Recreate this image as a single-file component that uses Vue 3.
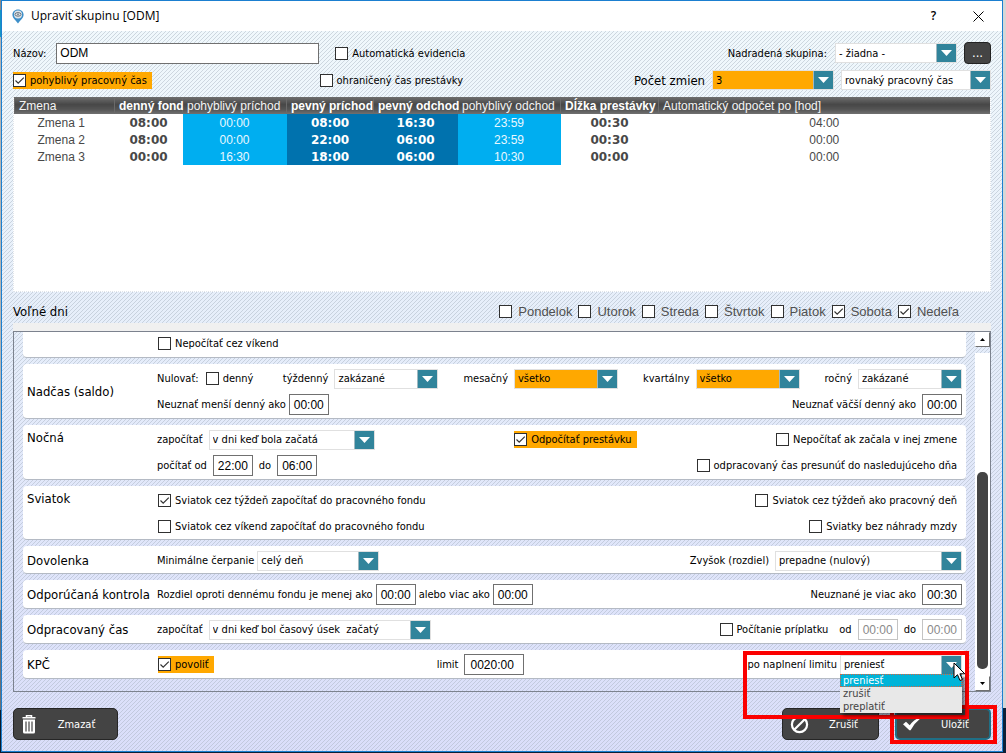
<script setup>
import { ref } from 'vue'

const days = ref([
  { name: 'Pondelok', on: false },
  { name: 'Utorok', on: false },
  { name: 'Streda', on: false },
  { name: 'Štvrtok', on: false },
  { name: 'Piatok', on: false },
  { name: 'Sobota', on: true },
  { name: 'Nedeľa', on: true }
])

const shifts = [
  ['Zmena 1', '08:00', '00:00', '08:00', '16:30', '23:59', '00:30', '04:00'],
  ['Zmena 2', '08:00', '00:00', '22:00', '06:00', '23:59', '00:30', '00:00'],
  ['Zmena 3', '00:00', '16:30', '18:00', '06:00', '10:30', '00:00', '00:00']
]

const overtime = [
  { id: 'ot-week', label: 'týždenný', value: 'zakázané', mark: false },
  { id: 'ot-month', label: 'mesačný', value: 'všetko', mark: true },
  { id: 'ot-quarter', label: 'kvartálny', value: 'všetko', mark: true },
  { id: 'ot-year', label: 'ročný', value: 'zakázané', mark: false }
]

const limitActions = ['preniesť', 'zrušiť', 'preplatiť']
</script>

<template>
  <div class="desktop">
    <main class="window">
      <header class="titlebar">
        <svg class="pin" width="12" height="15" viewBox="0 0 12 15" aria-hidden="true">
          <path d="M6 0.5C2.8 0.5.4 2.8.4 5.8c0 3 3 5.300 5.600 8.700 2.600-3.400 5.600-5.700 5.600-8.700C11.600 2.800 9.200.5 6 .5z" fill="#3d8fc9" />
          <circle cx="6" cy="5.600" r="4" fill="#dfe5ea" />
          <ellipse cx="6" cy="5.400" rx="3" ry="1.800" fill="none" stroke="#68747e" />
          <circle cx="6" cy="5.400" r=".8" fill="#68747e" />
        </svg>
        <h1>Upraviť skupinu [ODM]</h1>
        <button class="tb-btn" type="button" aria-label="Pomocník">?</button>
        <button class="tb-btn" type="button" aria-label="Zavrieť">
          <svg width="11" height="11" viewBox="0 0 11 11"><path d="M.5.5l10 10M10.500.5l-10 10" stroke="#000" fill="none" /></svg>
        </button>
      </header>

      <form class="body" @submit.prevent>
        <div class="line first">
          <label for="name">Názov:</label>
          <input id="name" class="txt name" type="text" value="ODM" />
          <label class="chk auto"><input type="checkbox" />Automatická evidencia</label>
          <label class="push" for="parent">Nadradená skupina:</label>
          <select id="parent" class="combo w122"><option>- žiadna -</option></select>
          <button class="dots" type="button">...</button>
        </div>

        <div class="line second">
          <div class="half">
            <label class="chk mark"><input type="checkbox" checked />pohyblivý pracovný čas</label>
            <label class="chk"><input type="checkbox" />ohraničený čas prestávky</label>
          </div>
          <label class="push big" for="count">Počet zmien</label>
          <select id="count" class="combo hot w122"><option>3</option></select>
          <select class="combo w150" aria-label="Typ pracovného času"><option>rovnaký pracovný čas</option></select>
        </div>

        <div class="grid-box">
          <table>
            <colgroup>
              <col class="c-name" /><col class="c-fund" /><col class="c-early" /><col class="c-in" />
              <col class="c-out" /><col class="c-late" /><col class="c-break" /><col />
            </colgroup>
            <thead>
              <tr>
                <th>Zmena</th><th class="b">denný fond</th><th>pohyblivý príchod</th><th class="b">pevný príchod</th>
                <th class="b">pevný odchod</th><th>pohyblivý odchod</th><th class="b">Dĺžka prestávky</th>
                <th>Automatický odpočet po [hod]</th>
              </tr>
            </thead>
            <tbody>
              <tr v-for="s in shifts" :key="s[0]">
                <td class="n">{{ s[0] }}</td><td class="b">{{ s[1] }}</td><td class="light">{{ s[2] }}</td>
                <td class="b dark">{{ s[3] }}</td><td class="b dark">{{ s[4] }}</td><td class="light">{{ s[5] }}</td>
                <td class="b">{{ s[6] }}</td><td>{{ s[7] }}</td>
              </tr>
            </tbody>
          </table>
        </div>

        <div class="days">
          <span class="big">Voľné dni</span>
          <label v-for="d in days" :key="d.name"><input v-model="d.on" type="checkbox" />{{ d.name }}</label>
        </div>
        <div class="strip"></div>

        <section class="panel">
          <div class="cards">
            <div class="card cut">
              <div class="rows">
                <div class="row"><label class="chk"><input type="checkbox" />Nepočítať cez víkend</label></div>
              </div>
            </div>

            <div class="card">
              <h2>Nadčas (saldo)</h2>
              <div class="rows">
                <div class="row groups">
                  <div class="f lead"><span>Nulovať:</span><label class="chk tight"><input type="checkbox" />denný</label></div>
                  <div v-for="o in overtime" :key="o.id" class="f">
                    <label :for="o.id">{{ o.label }}</label>
                    <select :id="o.id" class="combo w104" :class="{ hot: o.mark }"><option>{{ o.value }}</option></select>
                  </div>
                </div>
                <div class="row">
                  <div class="f snug"><label for="min-day">Neuznať menší denný ako</label><input id="min-day" class="txt time" type="text" value="00:00" /></div>
                  <div class="f"><label for="max-day">Neuznať väčší denný ako</label><input id="max-day" class="txt time" type="text" value="00:00" /></div>
                </div>
              </div>
            </div>

            <div class="card top">
              <h2>Nočná</h2>
              <div class="rows">
                <div class="row">
                  <div class="f"><label for="night">započítať</label><select id="night" class="combo w166"><option>v dni keď bola začatá</option></select></div>
                  <label class="chk mark"><input type="checkbox" checked />Odpočítať prestávku</label>
                  <label class="chk"><input type="checkbox" />Nepočítať ak začala v inej zmene</label>
                </div>
                <div class="row">
                  <div class="f"><label for="n-from">počítať od</label><input id="n-from" class="txt time" type="text" value="22:00" />
                    <label for="n-to">do</label><input id="n-to" class="txt time" type="text" value="06:00" /></div>
                  <label class="chk"><input type="checkbox" />odpracovaný čas presunúť do nasledujúceho dňa</label>
                </div>
              </div>
            </div>

            <div class="card top compact">
              <h2>Sviatok</h2>
              <div class="rows">
                <div class="row">
                  <label class="chk"><input type="checkbox" checked />Sviatok cez týždeň započítať do pracovného fondu</label>
                  <label class="chk"><input type="checkbox" />Sviatok cez týždeň ako pracovný deň</label>
                </div>
                <div class="row">
                  <label class="chk"><input type="checkbox" />Sviatok cez víkend započítať do pracovného fondu</label>
                  <label class="chk"><input type="checkbox" />Sviatky bez náhrady mzdy</label>
                </div>
              </div>
            </div>

            <div class="card compact">
              <h2>Dovolenka</h2>
              <div class="rows">
                <div class="row">
                  <div class="f snug"><label for="vac">Minimálne čerpanie</label><select id="vac" class="combo w122"><option>celý deň</option></select></div>
                  <div class="f"><label for="rest">Zvyšok (rozdiel)</label><select id="rest" class="combo w187"><option>prepadne (nulový)</option></select></div>
                </div>
              </div>
            </div>

            <div class="card">
              <h2>Odporúčaná kontrola</h2>
              <div class="rows">
                <div class="row">
                  <div class="f snug"><label for="less">Rozdiel oproti dennému fondu je menej ako</label><input id="less" class="txt time" type="text" value="00:00" />
                    <label for="more">alebo viac ako</label><input id="more" class="txt time" type="text" value="00:00" /></div>
                  <div class="f"><label for="unrec">Neuznané je viac ako</label><input id="unrec" class="txt time" type="text" value="00:30" /></div>
                </div>
              </div>
            </div>

            <div class="card">
              <h2>Odpracovaný čas</h2>
              <div class="rows">
                <div class="row">
                  <div class="f"><label for="worked">započítať</label><select id="worked" class="combo w222"><option>v dni keď bol časový úsek&nbsp; začatý</option></select></div>
                  <div class="f">
                    <label class="chk"><input type="checkbox" />Počítanie príplatku</label>
                    <label for="b-from">od</label><input id="b-from" class="txt time" type="text" value="00:00" disabled />
                    <label for="b-to">do</label><input id="b-to" class="txt time" type="text" value="00:00" disabled />
                  </div>
                </div>
              </div>
            </div>

            <div class="card">
              <h2>KPČ</h2>
              <div class="rows">
                <div class="row">
                  <label class="chk mark"><input type="checkbox" checked />povoliť</label>
                  <div class="f"><label for="limit">limit</label><input id="limit" class="txt limit" type="text" value="0020:00" /></div>
                  <div class="f snug target">
                    <label for="after">po naplnení limitu</label>
                    <div class="open">
                      <select id="after" class="combo w122"><option v-for="a in limitActions" :key="a">{{ a }}</option></select>
                      <ul>
                        <li v-for="(a, i) in limitActions" :key="a" :class="{ sel: i === 0 }">{{ a }}</li>
                      </ul>
                      <svg class="cursor" width="13" height="20" viewBox="0 0 13 20" aria-hidden="true">
                        <path d="M1 1v15l3.500-3.300 2.500 5.800 2.400-1-2.500-5.700h4.900z" fill="#fff" stroke="#000" />
                      </svg>
                    </div>
                    <span class="frame frame-limit"></span>
                  </div>
                </div>
              </div>
            </div>
          </div>

          <div class="scroll">
            <button type="button" aria-label="Nahor"><svg width="5" height="3" viewBox="0 0 5 3"><path d="M0 3L2.500 0 5 3z" /></svg></button>
            <div class="track"><div class="thumb"></div></div>
            <button type="button" aria-label="Nadol"><svg width="5" height="3" viewBox="0 0 5 3"><path d="M0 0L2.500 3 5 0z" /></svg></button>
          </div>
        </section>

        <footer>
          <button class="act del" type="button">
            <svg width="14" height="19" viewBox="0 0 14 19" aria-hidden="true">
              <path d="M4.500 2V.8h5V2M.5 2.800h13" fill="none" stroke="#fff" stroke-width="1.500" />
              <path d="M1 4.500h12v12.500q0 1.500-1.500 1.500h-9Q1 18.500 1 17z" fill="#fff" />
              <path d="M4 6.500v10M7 6.500v10M10 6.500v10" stroke="#444" stroke-width="1.200" />
            </svg>
            <span>Zmazať</span>
          </button>
          <button class="act cancel" type="button">
            <svg width="19" height="19" viewBox="0 0 19 19" aria-hidden="true">
              <circle cx="9.500" cy="9.500" r="7.600" fill="none" stroke="#fff" stroke-width="2.200" />
              <path d="M4.200 14.800L14.800 4.200" stroke="#fff" stroke-width="2.200" />
            </svg>
            <span>Zrušiť</span>
          </button>
          <div class="save-wrap">
            <button class="act save" type="submit">
              <svg width="18" height="14" viewBox="0 0 18 14" aria-hidden="true">
                <path d="M0 7.200L3 4.800l3.700 3.400Q10.500 3 17 0l.8 1Q11.500 6 7.600 13.200H6.400z" fill="#fff" />
              </svg>
              <span>Uložiť</span>
            </button>
            <span class="frame frame-save"></span>
          </div>
        </footer>
      </form>
    </main>
  </div>
</template>

<style>
body {
  background: linear-gradient(#d6d6d6 0 94%, #0b2038 94% 100%);
}
</style>

<style scoped>
.desktop {
  min-height: 100vh;
  display: flex;
  box-sizing: border-box;
  padding: 0 3px 1px 1px;
  background: linear-gradient(#8a8a8a 0 10px, #1596c4 10px 37px, #b4b4b4 37px 610px, #6c7077 610px 710px, #0b1a2c 710px) 0 0 / 1px 100% no-repeat;
  font: 11px/15px "DejaVu Sans Condensed", "DejaVu Sans", sans-serif;
  color: #000;
}
.desktop *, .desktop *::before { box-sizing: border-box; }
.window {
  flex: 1;
  min-width: 0;
  display: flex;
  flex-direction: column;
  border: 1px solid #1b7fd0;
  background: #fff;
}
.titlebar {
  height: 30px;
  display: flex;
  align-items: center;
  padding: 0 1px 0 10px;
  background: #fff;
}
h1 {
  margin: 0 auto 0 7px;
  font: 12px/16px "Open Sans", "Noto Sans", sans-serif;
}
.tb-btn {
  width: 45px;
  height: 28px;
  padding: 0;
  border: 0;
  background: none;
  font: 600 12px/16px "Open Sans", "Noto Sans", sans-serif;
  color: #000;
}
.tb-btn svg { display: block; margin: 0 auto; }
.body {
  flex: 1;
  display: flex;
  flex-direction: column;
  padding: 11px;
  background:
    url("data:image/svg+xml,%3Csvg xmlns='http://www.w3.org/2000/svg' width='4' height='4' shape-rendering='crispEdges'%3E%3Cpath d='M3 0h1v1h-1zM2 1h1v1h-1zM1 2h1v1h-1zM0 3h1v1h-1z' fill='%23a4b0bd' fill-opacity='.45'/%3E%3C/svg%3E"),
    linear-gradient(#f0f8fc, #e6eefa 40%, #dadefa);
}
.line { display: flex; align-items: center; }
.first { height: 22px; margin-bottom: 6px; }
.second { height: 20px; margin-bottom: 7px; gap: 7px; }
.push { margin-left: auto; }
.big { font-size: 13px; }
.half { display: flex; justify-content: space-between; flex: 0 1 455px; }

.txt {
  height: 21px;
  padding: 0 3px;
  border: 1px solid #707070;
  border-radius: 0;
  background: #fff;
  color: #000;
  font: 12px/17px "Liberation Sans", sans-serif;
}
.name { flex: 0 1 263px; min-width: 0; margin-left: 10px; }
.time { width: 40px; padding: 0; text-align: center; }
.limit { width: 60px; padding: 0 0 0 5px; }
.txt:disabled { border-color: #c4c4c4; color: #8a8a8a; }

.combo {
  appearance: none;
  height: 20px;
  padding: 0 20px 0 3px;
  border: 1px solid #e0e0e0;
  border-radius: 0;
  color: #000;
  font: inherit;
  line-height: 17px;
  background: #fff url("data:image/svg+xml,%3Csvg xmlns='http://www.w3.org/2000/svg' width='20' height='18'%3E%3Cpath d='M0 0h20v18H0z' fill='%2331849b'/%3E%3Cpath d='M0 0h1v18H0z' fill='%23a0b8c0'/%3E%3Cpath d='M5 6h11l-5.500 6z' fill='%23fff'/%3E%3C/svg%3E") right 0 top 0 no-repeat;
}
.hot { background-color: #ffa800; }
.w104 { width: 104px; }
.w122 { width: 122px; }
.w150 { width: 150px; }
.w166 { width: 166px; }
.w187 { width: 187px; }
.w222 { width: 222px; }
.first .combo { margin: 0 7px 0 8px; }
.dots {
  width: 27px;
  height: 22px;
  padding: 0;
  border: 1px solid #222;
  border-radius: 4px;
  background: #444;
  color: #fff;
  font: 13px/18px "DejaVu Sans Condensed", sans-serif;
}

input[type="checkbox"] {
  appearance: none;
  flex: none;
  width: 13px;
  height: 13px;
  margin: 0;
  border: 1px solid #303030;
  background: #fff;
}
input[type="checkbox"]:checked {
  background: #fff url("data:image/svg+xml,%3Csvg xmlns='http://www.w3.org/2000/svg' width='11' height='11'%3E%3Cpath d='M1.500 5.500l2.700 2.700 5.600-5.600' fill='none' stroke='%23333' stroke-width='1.200'/%3E%3C/svg%3E") center no-repeat;
}
.chk {
  display: flex;
  align-items: center;
  gap: 4px;
  height: 17px;
  padding-right: 5px;
  white-space: nowrap;
}
.chk.auto { margin-left: 16px; }
.chk.tight { padding: 0; }
.rows .chk { margin-left: 1px; }
.mark { background: #ffa800; }

.grid-box {
  flex: 1 0 190px;
  background: #fff;
  border: 1px dotted #dfe4ea;
  border-top: 0;
}
table {
  width: 100%;
  table-layout: fixed;
  border-collapse: collapse;
  font: 12px/17px "Liberation Sans", sans-serif;
  color: #484848;
}
.c-name { width: 100px; }
.c-fund { width: 68px; }
.c-early { width: 104px; }
.c-in { width: 87px; }
.c-out { width: 84px; }
.c-late { width: 103px; }
.c-break { width: 98px; }
th {
  height: 17px;
  padding: 1px 0 0 4px;
  line-height: 16px;
  text-align: left;
  font-weight: normal;
  white-space: nowrap;
  color: #f4f4f4;
  border-left: 1px solid #6a6a6a;
  background: linear-gradient(#6e6e6e, #474747 45%, #565656 75%, #707070);
}
th.b { font-weight: bold; color: #fff; }
td { height: 17px; padding: 1px 0 0; line-height: 16px; text-align: center; }
td.n { padding-left: 23px; text-align: left; }
td.b { font: bold 12px/16px "DejaVu Sans", sans-serif; }
.light { background: #00aef0; color: #e8f8ff; }
.dark { background: #0072ae; color: #fff; }

.days {
  height: 31px;
  display: flex;
  align-items: center;
  gap: 6px;
  padding: 7px 32px 0 0;
}
.days .big { margin-right: auto; }
.days label {
  display: flex;
  align-items: center;
  gap: 6px;
  font: 13px/15px "Liberation Sans", sans-serif;
  color: #505050;
}
.strip { height: 8px; background: #f0f0f0; }

.panel {
  position: relative;
  z-index: 1;
  display: flex;
  border: 1px solid #7c828e;
}
.cards {
  flex: 1;
  min-width: 0;
  display: flex;
  flex-direction: column;
  gap: 6px;
  padding: 0 9px 12px 9px;
}
.card {
  display: flex;
  align-items: center;
  padding: 4px 4px 3px;
  border-bottom: 1px solid #b4bac4;
  border-radius: 4px;
  background: #fff;
}
.card.cut { border-radius: 0 0 4px 4px; padding: 1px 4px 3px; }
.card.compact { padding-bottom: 2px; }
.card.top { align-items: flex-start; }
h2 { width: 130px; margin: 0; font: 13px/17px "DejaVu Sans Condensed", "DejaVu Sans", sans-serif; white-space: nowrap; }
.rows { flex: 1; min-width: 0; display: flex; flex-direction: column; gap: 5px; }
.cut .rows { margin-left: 130px; }
.row { height: 21px; display: flex; align-items: center; justify-content: space-between; }
.groups { gap: 25px; }
.lead { margin-right: auto; }
.f { display: flex; align-items: center; gap: 6px; white-space: nowrap; }
.f.snug { gap: 3px; }

.target { position: relative; }
.open { position: relative; height: 20px; }
.open ul {
  position: absolute;
  left: 0;
  right: 0;
  top: 19px;
  z-index: 2;
  margin: 0;
  padding: 0;
  list-style: none;
  background: #e8e8e8;
  color: #444;
  box-shadow: 3px 3px 3px rgba(0, 0, 0, .5);
}
.open li { height: 13px; padding: 0 3px; line-height: 13px; }
.open li.sel { padding: 0 2px; line-height: 11px; border: 1px dotted #e0603c; background: #00b4d8; color: #fff; }
.cursor { position: absolute; right: -4px; top: 7px; z-index: 3; }
.frame { position: absolute; border: 4px solid #fb0000; pointer-events: none; }
.frame-limit { left: -5px; right: -7px; top: -4px; height: 68px; }
.frame-save { inset: -3px -6px -4px -5px; }

.scroll { flex: 0 0 15px; display: flex; flex-direction: column; }
.scroll button {
  width: 15px;
  height: 15px;
  padding: 0;
  border: 1px solid;
  border-color: #fff #707070 #707070 #fff;
  background: #fff;
}
.scroll button svg { display: block; margin: 0 auto; }
.track { flex: 1; margin-top: 6px; padding: 119px 2px 7px; background: #fff; display: flex; }
.thumb { flex: 1; border-radius: 5px; background: #444; }

footer { display: flex; align-items: flex-start; margin-top: 16px; }
.act {
  height: 32px;
  display: flex;
  align-items: center;
  padding: 0 0 0 8px;
  border: 1px solid #262626;
  border-radius: 5px;
  background: #444;
  color: #fff;
  font: inherit;
}
.act span { flex: 1; text-align: center; }
.del { width: 105px; margin-right: auto; }
.cancel { width: 97px; margin-right: 16px; padding-left: 7px; }
.save-wrap { position: relative; }
.save { width: 96px; border: 2px solid #1f6f86; padding-left: 6px; }
</style>
